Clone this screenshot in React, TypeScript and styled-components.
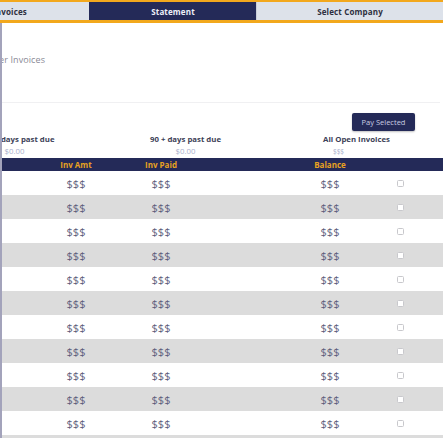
import React from "react";
import styled, { createGlobalStyle } from "styled-components";

const Global = createGlobalStyle`
  html, body { margin: 0; padding: 0; background: #ffffff; }
  body { font-family: "Open Sans", "Liberation Sans", sans-serif; }
  * { box-sizing: border-box; }
`;

const Viewport = styled.div`
  width: 443px;
  height: 438px;
  overflow: hidden;
  background: #ffffff;
  display: flex;
  flex-direction: column;
`;

const TabBar = styled.div`
  display: grid;
  grid-template-columns: 159px 167px 187px;
  margin-left: -70px;
  height: 23px;
  border-top: 2px solid #f2a81d;
  border-bottom: 3px solid #f2a81d;
  background: #dde2ea;
  flex: none;
`;

const Tab = styled.div<{ $active?: boolean }>`
  display: flex;
  align-items: center;
  justify-content: center;
  font-size: 8px;
  font-weight: 700;
  letter-spacing: 0.15px;
  color: ${(p) => (p.$active ? "#eef0f8" : "#2e3040")};
  background: ${(p) => (p.$active ? "#242a58" : "transparent")};
  border-left: 1px solid ${(p) => (p.$active ? "#242a58" : "#c9ced8")};
`;

const Panel = styled.div`
  flex: 1;
  border-left: 2px solid #a3a3bb;
  overflow: hidden;
  display: flex;
  flex-direction: column;
  & > * {
    flex-shrink: 0;
  }
`;

const TitleBlock = styled.div`
  height: 80px;
  display: flex;
  align-items: center;
  padding-bottom: 6px;
  border-bottom: 1px solid #f0f0f2;
  margin-right: 3px;
`;

const Title = styled.div`
  margin-left: -36px;
  font-size: 9px;
  color: #8a8a96;
  letter-spacing: 0.1px;
`;

const ActionRow = styled.div`
  display: flex;
  justify-content: flex-end;
  padding: 10px 28px 0 0;
`;

const PayButton = styled.button`
  width: 63px;
  height: 18px;
  border: none;
  border-radius: 2px;
  background: #242a58;
  color: #c9cce2;
  font-family: "Open Sans", "Liberation Sans", sans-serif;
  font-size: 7.5px;
  padding: 0;
  box-shadow: 0 1px 2px rgba(0, 0, 0, 0.25);
`;

const Summary = styled.div`
  display: grid;
  grid-template-columns: repeat(3, 171px);
  margin-left: -73px;
  margin-top: 2px;
`;

const SummaryCol = styled.div`
  display: flex;
  flex-direction: column;
  align-items: center;
`;

const SummaryLabel = styled.div`
  font-size: 7.8px;
  font-weight: 700;
  color: #3d3f58;
  line-height: 12px;
`;

const SummaryValue = styled.div<{ $shift?: number; $small?: boolean }>`
  font-size: ${(p) => (p.$small ? 6.5 : 7.8)}px;
  color: #a9b0cc;
  line-height: 13px;
  margin-right: ${(p) => p.$shift ?? 0}px;
`;

const Table = styled.div`
  display: flex;
  flex-direction: column;
  margin-left: -2px;
`;

const cols = "38px 76px 94px 80px 84px 56px 1fr";

const HeadRow = styled.div`
  display: grid;
  grid-template-columns: ${cols};
  height: 13px;
  align-items: center;
  background: #242a58;
`;

const HeadCell = styled.div`
  text-align: center;
  font-size: 8px;
  font-weight: 700;
  color: #e8a21f;
`;

const Row = styled.div<{ $alt: boolean }>`
  display: grid;
  grid-template-columns: ${cols};
  height: 24px;
  align-items: center;
  background: ${(p) => (p.$alt ? "#dcdcdc" : "#ffffff")};
`;

const Cell = styled.div`
  text-align: center;
  font-size: 11px;
  color: #5f5f7d;
`;

const CheckCell = styled.div`
  display: flex;
  justify-content: center;
`;

const Check = styled.span`
  width: 7px;
  height: 7px;
  border: 1px solid #c8c8cc;
  border-radius: 1.5px;
  background: #ffffff;
`;

export default function App() {
  const rows = Array.from({ length: 12 }, (_, i) => i);
  return (
    <>
      <Global />
      <Viewport>
        <TabBar>
          <Tab>Invoices</Tab>
          <Tab $active>Statement</Tab>
          <Tab>Select Company</Tab>
        </TabBar>
        <Panel>
          <TitleBlock>
            <Title>Customer Invoices</Title>
          </TitleBlock>
          <ActionRow>
            <PayButton>Pay Selected</PayButton>
          </ActionRow>
          <Summary>
            <SummaryCol>
              <SummaryLabel>61 - 90 days past due</SummaryLabel>
              <SummaryValue>$0.00</SummaryValue>
            </SummaryCol>
            <SummaryCol>
              <SummaryLabel>90 + days past due</SummaryLabel>
              <SummaryValue>$0.00</SummaryValue>
            </SummaryCol>
            <SummaryCol>
              <SummaryLabel>All Open Invoices</SummaryLabel>
              <SummaryValue $small $shift={36}>$$$</SummaryValue>
            </SummaryCol>
          </Summary>
          <Table>
            <HeadRow>
              <HeadCell />
              <HeadCell>Inv Amt</HeadCell>
              <HeadCell>Inv Paid</HeadCell>
              <HeadCell />
              <HeadCell>Balance</HeadCell>
              <HeadCell />
              <HeadCell />
            </HeadRow>
            {rows.map((i) => (
              <Row key={i} $alt={i % 2 === 1}>
                <Cell />
                <Cell>$$$</Cell>
                <Cell>$$$</Cell>
                <Cell />
                <Cell>$$$</Cell>
                <CheckCell>
                  <Check />
                </CheckCell>
                <Cell />
              </Row>
            ))}
          </Table>
        </Panel>
      </Viewport>
    </>
  );
}
